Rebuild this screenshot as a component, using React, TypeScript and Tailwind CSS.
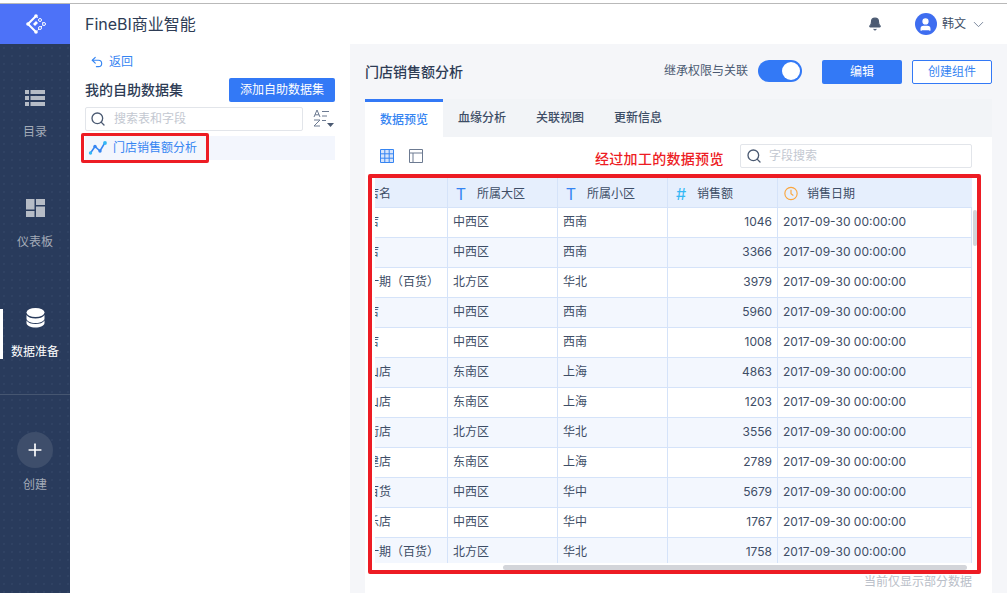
import { Bell, ChevronDown, Plus, Search, Undo2, User } from "lucide-react";

const rows = [
  { name: "门店", area: "中西区", sub: "西南", amount: 1046 },
  { name: "门店", area: "中西区", sub: "西南", amount: 3366 },
  { name: "一期（百货）", area: "北方区", sub: "华北", amount: 3979, offset: true },
  { name: "门店", area: "中西区", sub: "西南", amount: 5960 },
  { name: "门店", area: "中西区", sub: "西南", amount: 1008 },
  { name: "中山店", area: "东南区", sub: "上海", amount: 4863 },
  { name: "金山店", area: "东南区", sub: "上海", amount: 1203 },
  { name: "新街店", area: "北方区", sub: "华北", amount: 3556 },
  { name: "福建店", area: "东南区", sub: "上海", amount: 2789 },
  { name: "武百货", area: "中西区", sub: "华中", amount: 5679 },
  { name: "天乐店", area: "中西区", sub: "华中", amount: 1767 },
  { name: "一期（百货）", area: "北方区", sub: "华北", amount: 1758, offset: true },
];

const font = "font-['Inter','Noto_Sans_CJK_SC',sans-serif]";

function Logo() {
  return (
    <svg width="20" height="20" viewBox="0 0 20 20" fill="white" className="ml-px">
      <path d="M10 2 2 10l8 8" fill="none" stroke="white" strokeWidth="2" />
      <path d="M10 2l8 8-8 8" fill="none" stroke="white" strokeWidth="1" strokeDasharray="2.500 2" />
      <circle cx="10" cy="2" r="1.800" />
      <circle cx="2" cy="10" r="1.800" />
      <circle cx="10" cy="18" r="1.800" />
      <circle cx="14" cy="6" r="1.500" fill="#4d72f8" stroke="white" />
      <circle cx="18" cy="10" r="1.500" fill="#4d72f8" stroke="white" />
      <circle cx="14" cy="14" r="1.500" fill="#4d72f8" stroke="white" />
      <path d="M7 10l3-3 2 2-3 3Z" />
    </svg>
  );
}

function ListIcon() {
  return (
    <svg width="20" height="16" viewBox="0 0 20 16" fill="#b6bcc6">
      <rect x="0" y="0" width="4" height="4" />
      <rect x="5.500" y="0" width="14.500" height="4" />
      <rect x="0" y="6" width="4" height="4" />
      <rect x="5.500" y="6" width="14.500" height="4" />
      <rect x="0" y="12" width="4" height="4" />
      <rect x="5.500" y="12" width="14.500" height="4" />
    </svg>
  );
}

function DashIcon() {
  return (
    <svg width="19" height="18" viewBox="0 0 19 18" fill="#b6bcc6">
      <rect x="0" y="0" width="8.500" height="10.500" />
      <rect x="10" y="0" width="9" height="6" />
      <rect x="0" y="12" width="8.500" height="6" />
      <rect x="10" y="7.500" width="9" height="10.500" />
    </svg>
  );
}

function DbIcon() {
  return (
    <svg width="19" height="20" viewBox="0 0 19 20" fill="white">
      <ellipse cx="9.500" cy="4.500" rx="9" ry="4.500" />
      <path d="M.5 7c1.500 2.400 5 3.600 9 3.600s7.500-1.200 9-3.600v3.500c0 2.500-4 4.500-9 4.500s-9-2-9-4.500Z" />
      <path d="M.5 12.500c1.500 2.400 5 3.600 9 3.600s7.500-1.200 9-3.600V15c0 2.500-4 4.500-9 4.500S.5 17.500.5 15Z" />
    </svg>
  );
}

function NavItem({ icon, label, active }: { icon: React.ReactNode; label: string; active?: boolean }) {
  return (
    <div className="relative flex h-[110px] flex-col items-center justify-center gap-[16px]">
      {active && <div className="absolute left-0 top-[30px] h-[50px] w-[3px] bg-white" />}
      <div className="flex h-5 items-center">{icon}</div>
      <span className={active ? "text-xs text-white" : "text-xs text-[#a4abb8]"}>{label}</span>
    </div>
  );
}

function TabItem({ label, active }: { label: string; active?: boolean }) {
  if (active) {
    return (
      <div className="flex h-[38px] w-[78px] items-center justify-center border-t-[3px] border-[#3379f6] bg-white pt-[1px] text-xs font-medium text-[#3685f2]">
        {label}
      </div>
    );
  }
  return <div className="flex h-[38px] w-[78px] items-center justify-center text-xs font-medium text-[#3d4d66]">{label}</div>;
}

function HeadCell({ icon, label, className }: { icon: React.ReactNode; label: string; className: string }) {
  return (
    <div className={`flex items-center border-[#d5e3f9] pl-[6px] pt-[2px] ${className}`}>
      <span className="flex w-[14px] justify-center">{icon}</span>
      <span className="ml-[9px] text-xs text-[#3d4d66]">{label}</span>
    </div>
  );
}

function ClockIcon() {
  return (
    <svg width="15" height="15" viewBox="0 0 15 15" fill="none" stroke="#faa53c" strokeWidth="1.200">
      <circle cx="7.500" cy="7.500" r="6.600" />
      <path d="M7.500 3.500v4.300l2.500 1.800" />
    </svg>
  );
}

export default function App() {
  return (
    <div className={`flex h-[593px] w-[1007px] flex-col overflow-hidden bg-white pt-[3px] ${font}`}>
      <div className="h-px shrink-0 bg-[#b9b9b9]" />
      <div className="relative flex min-h-0 flex-1">
        {/* sidebar */}
        <aside className="flex w-[70px] shrink-0 flex-col bg-[#293b5c] bg-[radial-gradient(#37496b_0.6px,transparent_0.8px)] bg-[length:8px_8px]">
          <div className="flex h-10 shrink-0 items-center justify-center bg-[#4d72f8]">
            <Logo />
          </div>
          <div className="mt-[15px]">
            <NavItem icon={<ListIcon />} label="目录" />
            <NavItem icon={<DashIcon />} label="仪表板" />
            <NavItem icon={<DbIcon />} label="数据准备" active />
          </div>
          <div className="mt-[5px] flex flex-col items-center border-t border-[#465671] pt-[37px]">
            <div className="flex h-9 w-9 items-center justify-center rounded-full bg-[#3e4e6b]">
              <Plus size={20} color="white" strokeWidth={2} />
            </div>
            <span className="mt-[9px] text-xs text-[#a4abb8]">创建</span>
          </div>
        </aside>

        <div className="flex min-w-0 flex-1 flex-col">
          {/* header */}
          <header className="flex h-10 shrink-0 items-center justify-between pl-[15px] pr-[20px]">
            <span className="text-base text-[#2e3c55]">FineBI商业智能</span>
            <div className="flex items-center">
              <Bell size={14} fill="#4b5a72" color="#4b5a72" />
              <div className="ml-[33px] flex h-[22px] w-[22px] items-center justify-center rounded-full bg-[#3e6df0]">
                <User size={15} fill="white" color="white" />
              </div>
              <span className="ml-[5px] text-xs text-[#3d4d66]">韩文</span>
              <ChevronDown size={17} color="#6c7a91" strokeWidth={1.25} className="ml-[4px]" />
            </div>
          </header>

          <div className="flex min-h-0 flex-1">
            {/* left panel */}
            <section className="relative w-[280px] shrink-0 pl-[15px] pr-[15px]">
              <div className="flex h-[22px] items-center pl-[5px] pt-[13px] text-xs text-[#3685f2]">
                <Undo2 size={14} color="#3685f2" />
                <span className="ml-[5px]">返回</span>
              </div>
              <div className="mt-[12px] flex h-6 items-center justify-between">
                <span className="text-sm font-medium text-[#2e3c55]">我的自助数据集</span>
                <button className="h-6 w-[106px] rounded-[2px] bg-[#3379f6] text-xs text-white">添加自助数据集</button>
              </div>
              <div className="mt-[5px] flex items-center justify-between">
                <div className="flex h-6 w-[218px] items-center rounded-[2px] border border-[#e2e5ea] pl-[4px]">
                  <Search size={16} color="#4b5a72" />
                  <span className="ml-[8px] text-xs text-[#c3c8d1]">搜索表和字段</span>
                </div>
                <svg width="22" height="20" viewBox="0 0 22 20" fill="none" stroke="#6c7a91" strokeWidth="1">
                  <path d="M1 8 4 1l3 7M2 5.800h4M1 11h6l-6 6h6M9 2.500h7M9 7h5M9 11.500h4" />
                  <path d="M14 14h7l-3.500 4Z" fill="#4b5a72" stroke="none" />
                </svg>
              </div>
              <div className="mt-[5px] flex h-6 items-center bg-[#f3f6fd] pl-[3px]">
                <svg width="20" height="16" viewBox="0 0 20 16" fill="none" stroke="#3685f2" strokeWidth="1.500">
                  <path d="M2.500 13 7 6.500l5 4.500 5-8.500" />
                  <circle cx="2.500" cy="13" r="1.700" fill="#35b8f5" stroke="none" />
                  <circle cx="7" cy="6.500" r="1.700" fill="#3685f2" stroke="none" />
                  <circle cx="12" cy="11" r="1.700" fill="#3685f2" stroke="none" />
                  <circle cx="17" cy="3" r="1.900" fill="#35b8f5" stroke="none" />
                </svg>
                <span className="ml-[5px] text-xs text-[#3685f2]">门店销售额分析</span>
              </div>
              <div className="absolute left-[11px] top-[89px] h-[30px] w-[128px] rounded-[2px] border-[3px] border-[#ed1c24]" />
            </section>

            {/* right panel */}
            <section className="relative flex min-w-0 flex-1 flex-col bg-[#f5f6f9] pl-[15px] pr-[15px]">
              <div className="flex h-[55px] shrink-0 items-center justify-between pt-[1px]">
                <span className="text-sm font-medium text-[#2e3c55]">门店销售额分析</span>
                <div className="flex items-center">
                  <span className="mb-[2px] text-xs text-[#4b5a72]">继承权限与关联</span>
                  <div className="mb-[2px] ml-[10px] flex h-[22px] w-[44px] items-center justify-end rounded-full bg-[#3379f6] pr-[2px]">
                    <div className="h-[18px] w-[18px] rounded-full bg-white" />
                  </div>
                  <button className="ml-[20px] h-6 w-20 rounded-[2px] bg-[#3379f6] text-xs text-white">编辑</button>
                  <button className="ml-[10px] h-6 w-20 rounded-[2px] border border-[#3379f6] bg-white text-xs text-[#3685f2]">创建组件</button>
                </div>
              </div>

              <div className="flex h-[38px] shrink-0 bg-[#f2f4f7]">
                <TabItem label="数据预览" active />
                <TabItem label="血缘分析" />
                <TabItem label="关联视图" />
                <TabItem label="更新信息" />
              </div>

              <div className="flex min-h-0 flex-1 flex-col bg-white">
                <div className="flex h-[41px] shrink-0 items-center pb-[3px] pl-[15px] pr-[20px]">
                  <svg width="14" height="14" viewBox="0 0 14 14" fill="#d6e4fb" stroke="#3685f2" strokeWidth="1">
                    <path d="M.5.500h13v13H.500ZM.500 4.800h13M.500 9.200h13M4.800.500v13M9.200.500v13" />
                  </svg>
                  <svg className="ml-[15px]" width="14" height="14" viewBox="0 0 14 14" fill="none" stroke="#6c7a91" strokeWidth="1">
                    <path d="M.5.500h13v13H.500ZM.500 4h13M4 4v9.500" />
                  </svg>
                  <span className="ml-[172px] mt-[6px] text-sm font-medium tracking-[0.3px] text-[#ed1c24]">经过加工的数据预览</span>
                  <div className="ml-auto flex h-6 w-[232px] items-center rounded-[2px] border border-[#e2e5ea] pl-[5px]">
                    <Search size={16} color="#4b5a72" />
                    <span className="ml-[7px] text-xs text-[#c3c8d1]">字段搜索</span>
                  </div>
                </div>

                {/* table */}
                <div className="ml-[10px] h-[385px] w-[597px] shrink-0 overflow-hidden">
                  <div className="flex h-[29px] bg-[#e6effd]">
                    <div className="flex w-[73px] items-center overflow-hidden border-r border-[#d5e3f9] pt-[2px]">
                      <span className="ml-[-20px] whitespace-nowrap text-xs text-[#3d4d66]">门店名</span>
                    </div>
                    <HeadCell className="w-[110px] border-r" label="所属大区" icon={<span className="text-base text-[#3685f2]">T</span>} />
                    <HeadCell className="w-[110px] border-r" label="所属小区" icon={<span className="text-base text-[#3685f2]">T</span>} />
                    <HeadCell className="w-[110px] border-r" label="销售额" icon={<span className="text-base text-[#35b8f5]">#</span>} />
                    <HeadCell className="w-[194px]" label="销售日期" icon={<ClockIcon />} />
                  </div>
                  {rows.map((r, i) => (
                    <div key={i} className={`flex h-[30px] border-t border-[#d5e3f9] text-xs text-[#3d4d66] ${i % 2 ? "bg-[#f3f7fe]" : "bg-white"}`}>
                      <div className="flex w-[73px] items-center overflow-hidden border-r border-[#d5e3f9] pb-[2px]">
                        <span className={`whitespace-nowrap ${r.offset ? "ml-[-8px]" : "ml-[-20px]"}`}>{r.name}</span>
                      </div>
                      <div className="flex w-[110px] items-center border-r border-[#d5e3f9] pb-[2px] pl-[5px]">{r.area}</div>
                      <div className="flex w-[110px] items-center border-r border-[#d5e3f9] pb-[2px] pl-[5px]">{r.sub}</div>
                      <div className="flex w-[110px] items-center justify-end border-r border-[#d5e3f9] pb-[2px] pr-[5px]">{r.amount}</div>
                      <div className="flex w-[194px] items-center border-r border-[#d5e3f9] pb-[2px] pl-[5px]">2017-09-30 00:00:00</div>
                    </div>
                  ))}
                </div>
                <div className="pr-[20px] pt-[11px] text-right text-xs text-[#b9bec8]">当前仅显示部分数据</div>
              </div>

              {/* scrollbars lying over the table */}
              <div className="absolute right-[30px] top-[166px] h-[36px] w-[4px] rounded-full bg-[#d3d5da]" />
              <div className="absolute bottom-[23px] left-[153px] h-[5px] w-[464px] rounded-full bg-[#d3d5da]" />
              {/* red annotation */}
              <div className="absolute left-[18px] top-[130px] h-[400px] w-[613px] rounded-[2px] border-4 border-[#ed1c24]" />
            </section>
          </div>
        </div>
      </div>
    </div>
  );
}
